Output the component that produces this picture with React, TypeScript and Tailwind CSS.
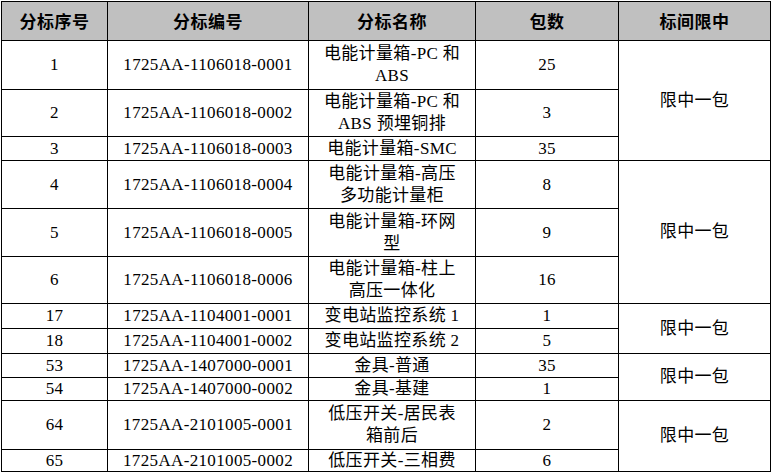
import React from "react";

type Row = { no: string; code: string; name: React.ReactNode; pk: string };

const rows: Row[] = [
  { no: "1", code: "1725AA-1106018-0001", name: <>电能计量箱-PC 和<br />ABS</>, pk: "25" },
  { no: "2", code: "1725AA-1106018-0002", name: <>电能计量箱-PC 和<br />ABS 预埋铜排</>, pk: "3" },
  { no: "3", code: "1725AA-1106018-0003", name: <>电能计量箱-SMC</>, pk: "35" },
  { no: "4", code: "1725AA-1106018-0004", name: <>电能计量箱-高压<br />多功能计量柜</>, pk: "8" },
  { no: "5", code: "1725AA-1106018-0005", name: <>电能计量箱-环网<br />型</>, pk: "9" },
  { no: "6", code: "1725AA-1106018-0006", name: <>电能计量箱-柱上<br />高压一体化</>, pk: "16" },
  { no: "17", code: "1725AA-1104001-0001", name: <>变电站监控系统 1</>, pk: "1" },
  { no: "18", code: "1725AA-1104001-0002", name: <>变电站监控系统 2</>, pk: "5" },
  { no: "53", code: "1725AA-1407000-0001", name: <>金具-普通</>, pk: "35" },
  { no: "54", code: "1725AA-1407000-0002", name: <>金具-基建</>, pk: "1" },
  { no: "64", code: "1725AA-2101005-0001", name: <>低压开关-居民表<br />箱前后</>, pk: "2" },
  { no: "65", code: "1725AA-2101005-0002", name: <>低压开关-三相费</>, pk: "6" },
];

// which rows start a merged 标间限中 cell and span
const spans: Record<number, string> = {
  0: "row-span-3",
  3: "row-span-3",
  6: "row-span-2",
  8: "row-span-2",
  10: "row-span-2",
};

const cell =
  "bg-white flex items-center justify-center text-center whitespace-nowrap text-[17px] leading-[22px] tracking-[0.35px] text-black";
const bodyFont = { fontFamily: '"Liberation Serif", "Noto Sans CJK SC", serif' };

export default function App() {
  const headers = ["分标序号", "分标编号", "分标名称", "包数", "标间限中"];
  return (
    <div className="w-[774px] h-[474px] bg-white">
      <div
        className="ml-px mt-px w-[770px] grid grid-cols-[105px_200px_166px_142px_151px] grid-rows-[38px_48px_46px_23px_47px_47px_46px_24px_24px_23px_22px_48px_21px] gap-px p-px bg-black"
        style={bodyFont}
      >
        {headers.map((h) => (
          <div
            key={h}
            className="bg-[#c0c0c0] flex items-center justify-center text-[17px] font-bold tracking-[0.5px] text-black"
            style={{ fontFamily: '"Noto Sans CJK SC", sans-serif' }}
          >
            {h}
          </div>
        ))}
        {rows.map((r, i) => (
          <React.Fragment key={r.no}>
            <div className={cell}>{r.no}</div>
            <div className={cell}>{r.code}</div>
            <div className={cell}>
              <div>{r.name}</div>
            </div>
            <div className={cell}>{r.pk}</div>
            {spans[i] !== undefined && (
              <div className={`${cell} ${spans[i]}`}>限中一包</div>
            )}
          </React.Fragment>
        ))}
      </div>
    </div>
  );
}
